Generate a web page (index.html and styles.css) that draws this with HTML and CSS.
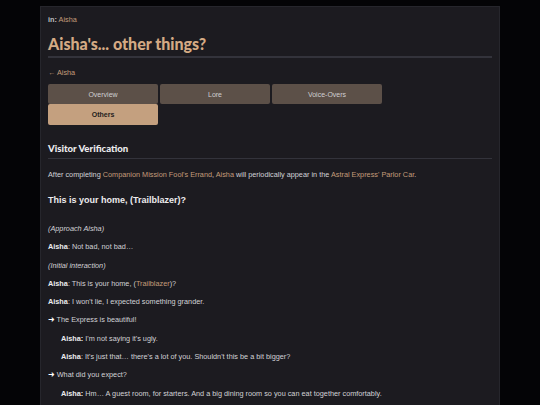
FILE: index.html
```html
<!DOCTYPE html>
<html>
<head>
<meta charset="utf-8">
<link rel="stylesheet" href="styles.css">
</head>
<body>
<main class="panel">
  <div class="crumb"><b>in:</b> <a class="link">Aisha</a></div>
  <h1 class="title">Aisha's... other things?</h1>
  <div class="back"><a class="link">← Aisha</a></div>
  <nav class="tabs">
    <a class="tab">Overview</a>
    <a class="tab">Lore</a>
    <a class="tab">Voice-Overs</a>
    <a class="tab active">Others</a>
  </nav>
  <h2 class="section">Visitor Verification</h2>
  <p>After completing <a class="link">Companion Mission Fool's Errand</a>, <a class="link">Aisha</a> will periodically appear in the <a class="link">Astral Express' Parlor Car</a>.</p>
  <h3 class="sub">This is your home, (Trailblazer)?</h3>
  <p><i>(Approach Aisha)</i></p>
  <p><b>Aisha</b>: Not bad, not bad…</p>
  <p><i>(Initial interaction)</i></p>
  <p><b>Aisha</b>: This is your home, (<a class="link">Trailblazer</a>)?</p>
  <p><b>Aisha</b>: I won't lie, I expected something grander.</p>
  <p class="opt"><span class="arrow">➜</span> The Express is beautiful!</p>
  <p class="ind"><b>Aisha:</b> I'm not saying it's ugly.</p>
  <p class="ind"><b>Aisha</b>: It's just that… there's a lot of you. Shouldn't this be a bit bigger?</p>
  <p class="opt"><span class="arrow">➜</span> What did you expect?</p>
  <p class="ind"><b>Aisha:</b> Hm… A guest room, for starters. And a big dining room so you can eat together comfortably.</p>
</main>
</body>
</html>
```
FILE: styles.css
```css
html, body {
  margin: 0;
  padding: 0;
  background: #040406;
  height: 100%;
  overflow: hidden;
}
body {
  font-family: "Liberation Sans", Arial, sans-serif;
  font-size: 7.3px;
  color: #d2d2d6;
  padding-top: 6px;
  box-sizing: border-box;
}
.panel {
  margin: 0 0 0 40px;
  width: 444px;
  height: 100%;
  overflow: hidden;
  padding: 8px 7px 0 7px;
  background: #1c1b20;
  border: 1px solid #26262c;
  border-bottom: none;
}
.link {
  color: #c49c7a;
  text-decoration: none;
}
.crumb {
  color: #bdbdc2;
  line-height: 9px;
}
.title {
  font-family: Lato, "Open Sans", sans-serif;
  font-weight: 900;
  font-size: 16px;
  line-height: 20px;
  color: #d4aa84;
  margin: 10px 0 0;
  padding-bottom: 2px;
  border-bottom: 2px solid #33333b;
}
.back {
  margin-top: 10px;
  line-height: 9px;
}
.tabs {
  display: grid;
  grid-template-columns: repeat(4, 110px);
  column-gap: 2px;
  margin-top: 7px;
}
.tab {
  height: 20px;
  display: flex;
  align-items: center;
  justify-content: center;
  background: #5c5048;
  color: #cfcfd2;
  border-radius: 2px;
  font-size: 7px;
}
.tab.active {
  grid-column: 1;
  height: 21px;
  background: #c4a07f;
  color: #24201c;
  font-weight: bold;
}
.section {
  font-family: Lato, "Open Sans", sans-serif;
  font-weight: 900;
  font-size: 9.6px;
  color: #ececee;
  margin: 17px 0 0;
  padding-bottom: 3px;
  line-height: 13px;
  border-bottom: 1px solid #33333b;
}
p {
  margin: 0;
  line-height: 9px;
  margin-top: 9.3px;
}
.section + p { margin-top: 11px; }
.sub {
  font-size: 9px;
  font-weight: bold;
  color: #ececee;
  margin: 16px 0 18px;
  line-height: 11px;
}
.sub + p { margin-top: 0; }
p b { color: #ececee; }
.ind { padding-left: 13px; }
.arrow { color: #ffffff; font-family: "DejaVu Sans", sans-serif; font-size: 8px; font-weight: bold; }
```
